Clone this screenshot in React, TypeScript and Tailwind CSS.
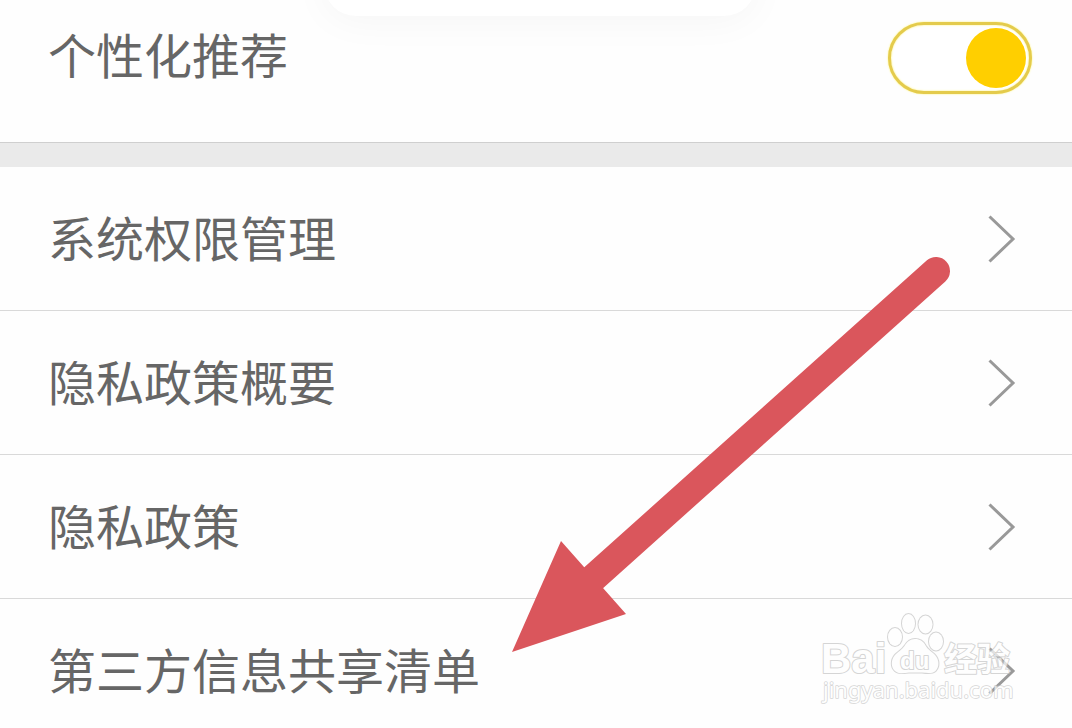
import React from "react";

const links = ["系统权限管理", "隐私政策概要", "隐私政策", "第三方信息共享清单"];

function Chevron() {
  return (
    <svg className="h-12 w-7 shrink-0" viewBox="0 0 28 48" fill="none" aria-hidden="true">
      <path d="M1.500 1.500 L25 24 L1.500 46.500" stroke="#999999" strokeWidth="3" />
    </svg>
  );
}

function Arrow() {
  return (
    <svg
      className="pointer-events-none absolute left-[512px] top-[256px] h-[396px] w-[440px]"
      viewBox="512 256 440 396"
      aria-hidden="true"
    >
      <path d="M590 581 L936 271" stroke="#da565c" strokeWidth="28" strokeLinecap="round" />
      <path d="M512 652 L561 541 L584 567 L603 588 L626 614 Z" fill="#da565c" />
    </svg>
  );
}

function Watermark() {
  return (
    <svg
      className="pointer-events-none absolute right-[52px] top-[608px] h-[100px] w-[200px] opacity-70"
      viewBox="820 608 200 100"
      fill="#ffffff"
      stroke="#c4c4c4"
      strokeWidth="2"
      strokeLinejoin="round"
      style={{ paintOrder: "stroke" }}
    >
      <text x="821" y="673" className="font-['Liberation_Sans'] text-[42px] font-bold">Bai</text>
      <g strokeWidth="2">
        <ellipse cx="895" cy="637" rx="7" ry="9" />
        <ellipse cx="908.500" cy="623.500" rx="6.500" ry="9.500" />
        <ellipse cx="925.500" cy="624.500" rx="7" ry="9" />
        <ellipse cx="936" cy="641.500" rx="7" ry="9" />
        <path d="M915 639c-5 0-8 3-10.500 7-2.500 4-6.500 5.500-9.500 9-4.500 5.500-4 12.500 0 16 4 3.500 9 2 14 1.500h13c5 .5 10 1.500 13.500-1.500 4-4 4-11-.5-16-3-3.500-7-5-9.500-9.500-2-4-5.500-6.500-10.500-6.500z" />
      </g>
      <text x="900" y="669" className="font-['Liberation_Sans'] text-[24px] font-bold">du</text>
      <text x="944" y="671" className="font-['Noto_Sans_CJK_SC'] text-[33px] font-bold">经验</text>
      <text x="823" y="698" strokeWidth="1.500" className="font-['Noto_Sans'] text-[22px]">jingyan.baidu.com</text>
    </svg>
  );
}

export default function App() {
  return (
    <main className="relative min-h-screen overflow-hidden bg-[#fefefe] font-['Noto_Sans_CJK_SC',sans-serif] text-[48px] leading-[62px] text-[#666666]">
      <label className="flex h-[142px] items-start justify-between pl-12 pr-10 pt-[22px]">
        <span>个性化推荐</span>
        <input
          type="checkbox"
          role="switch"
          defaultChecked
          className="flex h-[72px] w-36 shrink-0 appearance-none items-center rounded-full border-[3px] border-[#e4cb4c] bg-white px-[3px] shadow-[0_0_2px_#fff36a,inset_0_0_2px_#fff36a] before:block before:size-[60px] before:rounded-full before:bg-[#ffcf00] checked:justify-end"
        />
      </label>
      <div className="h-[25px] border-t border-[#cfcfcf] bg-[#eaeaea]" />
      <nav>
        {links.map((text) => (
          <a
            key={text}
            href="#"
            className="flex h-36 items-center justify-between border-b border-[#d9d9d9] pl-12 pr-14"
          >
            <span className="pb-1.5">{text}</span>
            <Chevron />
          </a>
        ))}
      </nav>
      <div className="pointer-events-none absolute -top-12 left-[324px] right-[316px] h-16 rounded-[36px] bg-white shadow-[0_4px_40px_rgba(0,0,0,0.04)]" />
      <Arrow />
      <Watermark />
    </main>
  );
}
